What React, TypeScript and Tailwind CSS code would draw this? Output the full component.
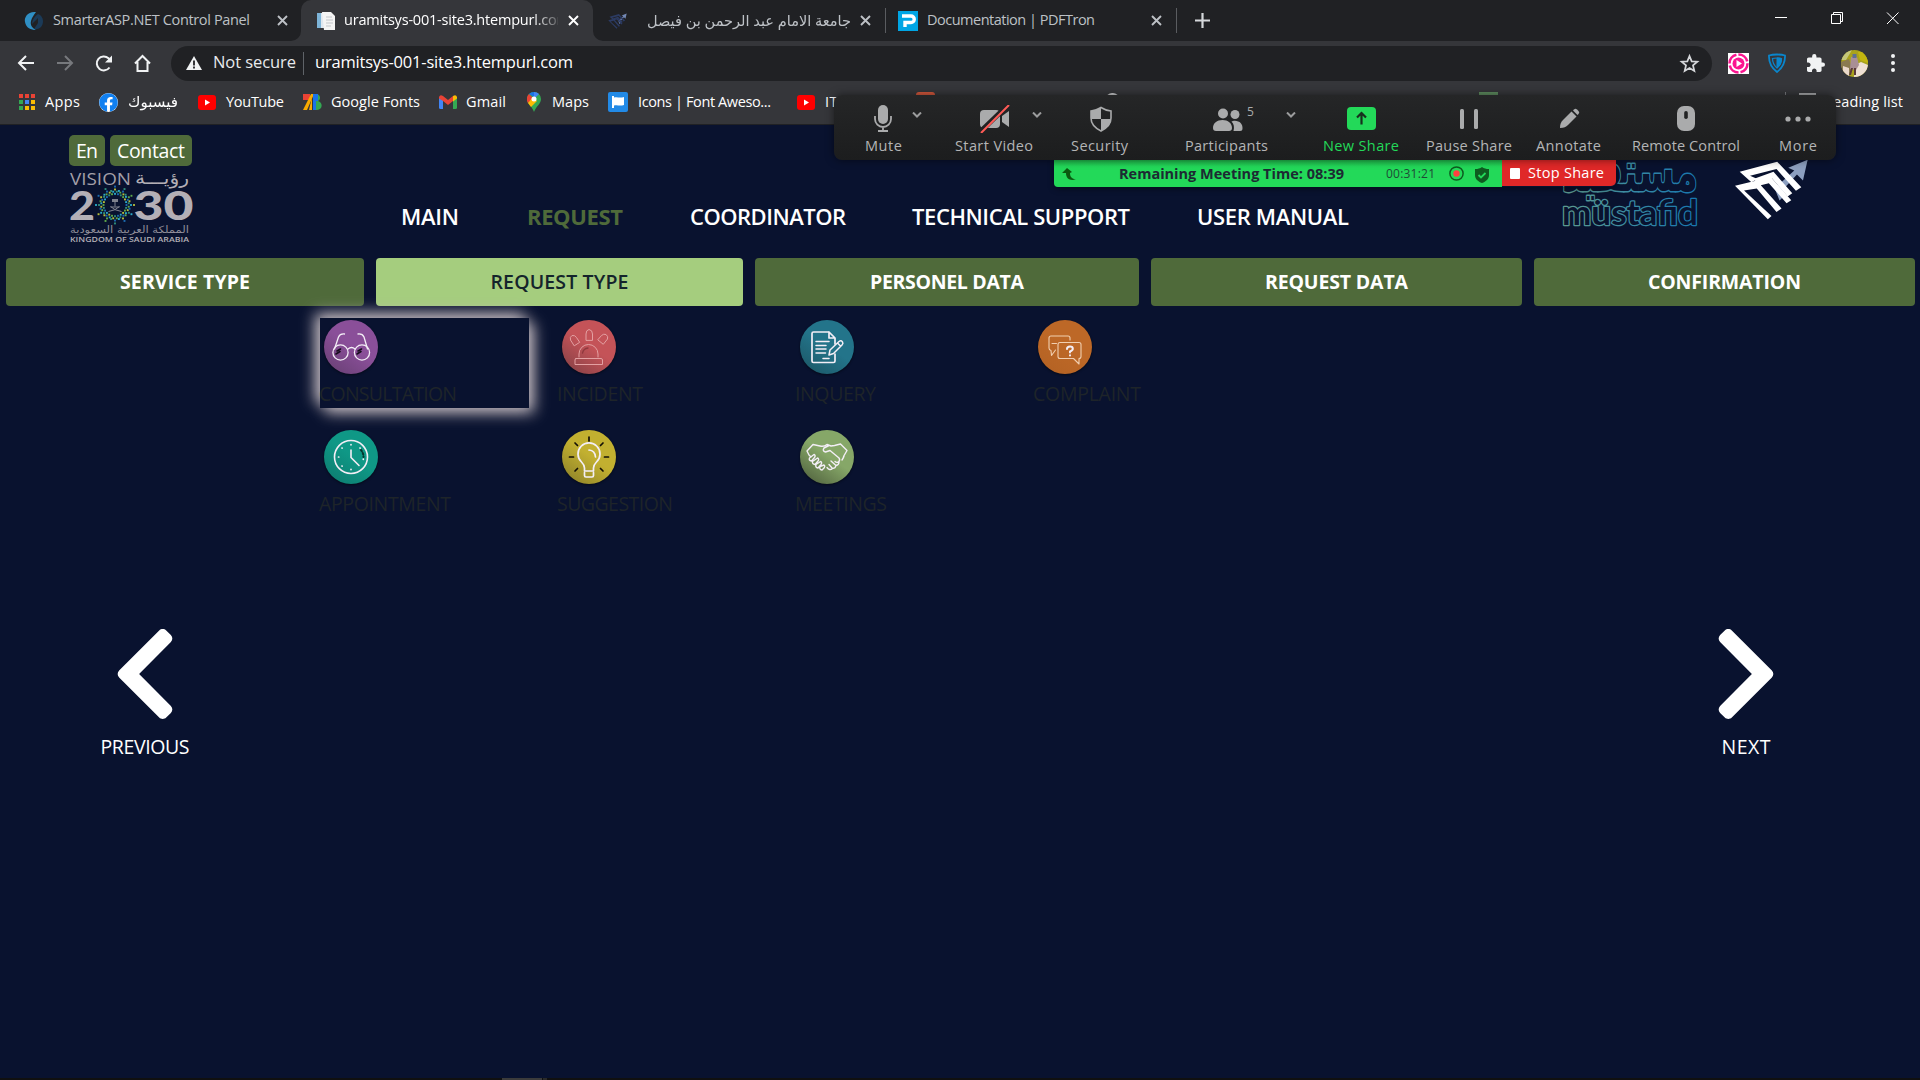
import { useLayoutEffect, useRef, type ReactNode } from 'react';
import { FaChevronLeft, FaChevronRight, FaFacebook } from 'react-icons/fa';

/** Single line of text that is spaced (or squeezed) to fill a fixed width. */
function Fit({ w, children, className = '', squeeze = false }: { w: number; children: string; className?: string; squeeze?: boolean }) {
  const ref = useRef<HTMLSpanElement>(null);
  useLayoutEffect(() => {
    const el = ref.current;
    if (!el) return;
    el.style.letterSpacing = '0px';
    el.style.transform = 'none';
    const natural = el.getBoundingClientRect().width;
    const target = w + 2;
    if (squeeze) el.style.transform = `scaleX(${target / natural})`;
    else el.style.letterSpacing = `${(target - natural) / Math.max(1, children.length - 1)}px`;
  }, [w, children, squeeze]);
  return (
    <span className={`block shrink-0 whitespace-nowrap ${className}`} style={{ width: w }}>
      <span ref={ref} className={squeeze ? '-ml-px inline-block origin-left' : '-ml-px inline-block'}>{children}</span>
    </span>
  );
}

const Cross = ({ className = '' }: { className?: string }) => (
  <svg viewBox="0 0 11 11" className={`h-[11px] w-[11px] shrink-0 ${className}`} stroke="currentColor" strokeWidth="1.9" fill="none">
    <path d="M1 1 10 10M10 1 1 10" />
  </svg>
);

const UniMark = ({ className = '', main = '#ffffff', arrow = '#8c9fc0' }: { className?: string; main?: string; arrow?: string }) => (
  <svg viewBox="582 55 224 185" className={className} fill="none">
    <path d="M802 60 744 84 762 92 716 134 706 152 718 182 736 164 728 150 770 104 788 122Z" fill={arrow} />
    <path d="M599 96 711 66 783 142 767 153 709 88 630 108 652 118 634 127Z" fill={main} />
    <path d="M640 118 700 96 756 160 742 170 696 116 650 128Z" fill={main} />
    <path d="M585 138 650 122 692 112 753 181 739 190 686 130 662 136 724 206 709 216 650 146 612 152 694 228 683 238Z" fill={main} />
  </svg>
);

function TabStrip() {
  return (
    <div className="flex h-[41px] items-center bg-[#202124] text-[14.5px] leading-5 text-[#bdc1c6]">
      <div className="flex h-full w-[301px] shrink-0 items-center">
        <svg viewBox="0 0 20 20" className="ml-6 h-5 w-5 shrink-0">
          <path d="M12 1C4 0 0 6 1 11c1 6 6 8 11 8-4-2-6-5-5-9s3-6 5-9Z" fill="#2f8fc4" />
          <path d="M14 3C10 6 8 9 8 13l6-6v5l-4 6c6 1 9-3 9-8 0-3-2-6-5-7Z" fill="#1b3a57" />
        </svg>
        <Fit w={195} className="ml-[10px] pb-[2px]">SmarterASP.NET Control Panel</Fit>
        <Cross className="ml-[28px]" />
      </div>
      <div className="relative flex h-full w-[292px] shrink-0 items-center rounded-t-[10px] bg-[#35363a] text-white">
        <svg viewBox="0 0 10 10" className="absolute bottom-0 -left-[10px] h-[10px] w-[10px]"><path d="M10 0v10H0A10 10 0 0 0 10 0Z" fill="#35363a" /></svg>
        <svg viewBox="0 0 10 10" className="absolute -right-[10px] bottom-0 h-[10px] w-[10px]"><path d="M0 0v10h10A10 10 0 0 1 0 0Z" fill="#35363a" /></svg>
        <svg viewBox="0 0 20 20" className="ml-[15px] h-5 w-5 shrink-0">
          <path d="M1 2h9l3 3v12H1Z" fill="#dfe7ef" /><path d="M1 2h4v15H1Z" fill="#7db4d8" />
          <path d="M6 1h9l4 4v14H8Z" fill="#f4f4f4" /><path d="M10 6h6M10 9h7M10 12h7M10 15h5" stroke="#c2c6ca" />
        </svg>
        <div className="ml-[8px] w-[214px] overflow-hidden pb-[2px] pl-px [mask-image:linear-gradient(90deg,#000_88%,transparent_103%)]">
          <Fit w={224}>uramitsys-001-site3.htempurl.com</Fit>
        </div>
        <Cross className="ml-[10px]" />
      </div>
      <UniMark className="ml-[15px] h-[18px] w-[19px] shrink-0" main="#2c3b63" arrow="#7388b4" />
      <Fit w={202} squeeze className="ml-[21px] pb-[2px] text-[15px]">جامعة الامام عبد الرحمن بن فيصل</Fit>
      <Cross className="ml-[10px]" />
      <div className="ml-[14px] h-[25px] w-px bg-[#5a5c60]" />
      <svg viewBox="0 0 20 20" className="ml-[12px] h-5 w-5 shrink-0">
        <path d="M0 0h20v20H0Z" fill="#00a5e4" />
        <path d="M4 5h9a3 3 0 0 1 0 6.500H7V16" fill="none" stroke="#fff" strokeWidth="3.400" />
      </svg>
      <Fit w={166} className="ml-[10px] pb-[2px]">Documentation | PDFTron</Fit>
      <Cross className="ml-[57px]" />
      <div className="ml-[14px] h-[25px] w-px bg-[#5a5c60]" />
      <svg viewBox="0 0 15 15" className="ml-[18px] h-[15px] w-[15px] shrink-0" stroke="#d5d8db" strokeWidth="2.200"><path d="M7.500 0v15M0 7.500h15" /></svg>
      <svg viewBox="0 0 124 12" className="mr-[21px] mb-[5px] ml-auto h-3 w-[124px] shrink-0" fill="none" stroke="#fff" strokeWidth="1">
        <path d="M0 5.500h12M56.500 2.500h9v9h-9ZM58.500 2.500v-2h9v9h-2" /><path d="M112 .5l11.500 11.500M123.500.5 112 12" />
      </svg>
    </div>
  );
}

function AddressBar() {
  return (
    <div className="flex h-[44px] items-center text-white">
      <svg viewBox="0 0 136 20" className="ml-[16px] mr-px h-5 w-[136px] shrink-0" fill="none" stroke="#f1f3f4" strokeWidth="2">
        <path d="M18 10H3.500M10 3 3 10l7 7" />
        <path d="M41 10h14.500M49 3l7 7-7 7" stroke="#77797d" />
        <path d="M93.500 14.500A7 7 0 1 1 92.500 5.200l2.500 3" /><path d="M96 2.500v7h-7Z" fill="#f1f3f4" stroke="none" />
        <path d="M119 10.500 126.500 3l7.500 7.500M121.500 9v9h10V9" />
      </svg>
      <div className="ml-[18px] flex h-[35px] w-[1541px] shrink-0 items-center rounded-full bg-[#202124] text-[16.500px]">
        <svg viewBox="0 0 16 14" className="ml-[15px] h-[14px] w-4 shrink-0"><path d="M8 0l8 14H0Z" fill="#f1f3f4" /><path d="M8 4.500v5M8 10.500v2" stroke="#202124" strokeWidth="1.800" /></svg>
        <Fit w={81} className="ml-[12px] pb-px text-[#e8eaed]">Not secure</Fit>
        <div className="ml-[8px] h-[23px] w-px bg-[#5f6368]" />
        <Fit w={256} className="ml-[12px] pb-px">uramitsys-001-site3.htempurl.com</Fit>
        <svg viewBox="0 0 24 24" className="mr-[12px] ml-auto h-[21px] w-[21px]" fill="none" stroke="#d5d7da" strokeWidth="2"><path d="M12 3.500l2.500 6 6.500.5-5 4.200 1.500 6.300L12 17.200 6.500 20.500 8 14.200 3 10l6.500-.5Z" /></svg>
      </div>
      <svg viewBox="0 0 21 21" className="ml-[16px] h-[21px] w-[21px] shrink-0">
        <path d="M0 0h21v21H0Z" fill="#fff" /><circle cx="10.500" cy="10.500" r="9" fill="none" stroke="#fb1590" strokeWidth="2.600" strokeDasharray="12 2" />
        <circle cx="10.500" cy="10.500" r="6" fill="#fb1590" /><path d="M8.500 7l5.500 3.500-5.500 3.500Z" fill="#fff" />
      </svg>
      <svg viewBox="0 0 18 20" className="ml-[19px] h-5 w-[18px] shrink-0" fill="none" stroke="#0a86cc">
        <path d="M9 1.500c3 0 5 0 8 1 .3 7-2 12-8 16.500C3 14.500.7 9.500 1 2.500c3-1 5-1 8-1Z" strokeWidth="1.800" />
        <path d="M9 5c2 0 3 0 4.500.5 0 4-1.500 7-4.500 9.500-3-2.500-4.500-5.500-4.500-9.500C6 5 7 5 9 5Z" strokeWidth="1.200" /><path d="M9 5c2 0 3 0 4.500.5 0 4-1.500 7-4.500 9.500Z" fill="#0a86cc" />
      </svg>
      <svg viewBox="2 1 21 21" className="ml-[21px] h-[18px] w-[18px] shrink-0" fill="#f1f3f4">
        <path d="M20.500 11H19V7c0-1.100-.9-2-2-2h-4V3.500a2.500 2.500 0 0 0-5 0V5H4c-1.100 0-1.990.9-1.990 2v3.800H3.500c1.490 0 2.700 1.210 2.700 2.700s-1.210 2.700-2.700 2.700H2V20c0 1.100.9 2 2 2h3.800v-1.500c0-1.490 1.210-2.700 2.700-2.700s2.700 1.210 2.700 2.700V22H17c1.100 0 2-.9 2-2v-4h1.500a2.500 2.500 0 0 0 0-5Z" />
      </svg>
      <svg viewBox="0 0 27 27" className="ml-[16px] h-[27px] w-[27px] shrink-0">
        <clipPath id="avatar"><circle cx="13.500" cy="13.500" r="13.500" /></clipPath>
        <g clipPath="url(#avatar)">
          <path d="M0 0h27v27H0Z" fill="#a9a21c" /><path d="M0 0h11L5 10H0Z" fill="#c5c77a" /><path d="M17 2h10v11L19 10Z" fill="#c3b50f" />
          <path d="M0 12l8-3 3 9-3 9H0Z" fill="#8a7a50" /><path d="M14 15l6-3 7 3v12H13Z" fill="#efe0d4" /><path d="M2 16l6 2v9H2Z" fill="#e9d8cb" />
          <path d="M10 7h6l2 8-3 5-6-1Z" fill="#a98f95" /><path d="M11.500 4h4v4h-4Z" fill="#5d6f95" /><path d="M10 18h2l-2 7H8ZM13 18h2v7h-2Z" fill="#5b3b3b" />
        </g>
      </svg>
      <svg viewBox="0 0 4 18" className="ml-[23px] h-[18px] w-1 shrink-0" fill="#f1f3f4"><circle cx="2" cy="2" r="2" /><circle cx="2" cy="9" r="2" /><circle cx="2" cy="16" r="2" /></svg>
    </div>
  );
}

const YouTube = ({ className = '' }: { className?: string }) => (
  <svg viewBox="0 0 18 15" className={`h-[15px] w-[18px] shrink-0 ${className}`}><rect width="18" height="15" rx="3" fill="#f00" /><path d="M7 4.500l5 3-5 3Z" fill="#fff" /></svg>
);

const appDots = ['#ea4335', '#ea4335', '#ea4335', '#34a853', '#4285f4', '#fbbc04', '#34a853', '#fbbc04', '#fbbc04'];

function Bookmarks() {
  return (
    <div className="flex h-[34px] items-center text-[14.500px] leading-5 text-white">
      <div className="ml-[19px] grid h-4 w-4 shrink-0 grid-cols-3 gap-[2px]">
        {appDots.map((c, i) => <i key={i} style={{ background: c }} />)}
      </div>
      <Fit w={33} className="ml-[11px]">Apps</Fit>
      <span className="ml-5 flex h-[19px] w-[19px] shrink-0 rounded-full bg-white"><FaFacebook className="h-[19px] w-[19px] text-[#1180f0]" /></span>
      <Fit w={48} squeeze className="ml-[11px]">فيسبوك</Fit>
      <YouTube className="ml-[21px]" />
      <Fit w={56} className="ml-[11px]">YouTube</Fit>
      <svg viewBox="0 0 19 16" className="ml-5 h-4 w-[19px] shrink-0">
        <path d="M0 0h7v6H0Z" fill="#ea4335" /><path d="M8 0h3L4 16H0Z" fill="#f9ab00" /><path d="M9 3v13H6Z" fill="#f9ab00" />
        <path d="M10 0h3v16h-3Z" fill="#1a73e8" /><path d="M13 0c5 0 5 6 2 7 5 1 5 9-1 9h-1Z" fill="#34a853" /><path d="M13 0h2v7h-2Z" fill="#1a73e8" />
      </svg>
      <Fit w={87} className="ml-[10px]">Google Fonts</Fit>
      <svg viewBox="0 0 18 14" className="ml-5 h-[14px] w-[18px] shrink-0">
        <path d="M0 2h4v12H1.500Q0 14 0 12.500Z" fill="#4285f4" /><path d="M14 2h4v10.500Q18 14 16.500 14H14Z" fill="#34a853" />
        <path d="M0 2Q1-1 4 1l5 4 5-4v5l-5 4-5-4L0 3.500Z" fill="#ea4335" /><path d="M14 1q3-2 4 1v1.500L14 6.500Z" fill="#fbbc04" />
      </svg>
      <Fit w={38} className="ml-[10px]">Gmail</Fit>
      <svg viewBox="0 0 14 20" className="ml-[22px] h-5 w-[14px] shrink-0">
        <path d="M7 0a7 7 0 0 1 7 7c0 5-5 7-7 13C5 14 0 12 0 7a7 7 0 0 1 7-7Z" fill="#34a853" /><path d="M7 7 2 2a7 7 0 0 0-1 9Z" fill="#ea4335" />
        <path d="M7 7V0a7 7 0 0 1 5 2Z" fill="#4285f4" /><path d="M7 0v5L2 2A7 7 0 0 1 7 0Z" fill="#1a73e8" /><path d="M1 11l5-6 4 4-6 6Z" fill="#fbbc04" /><circle cx="7" cy="7" r="2.500" fill="#fff" />
      </svg>
      <Fit w={35} className="ml-[12px]">Maps</Fit>
      <svg viewBox="0 0 20 20" className="ml-5 h-5 w-5 shrink-0"><rect width="20" height="20" rx="2" fill="#228ae6" /><path d="M4 4h2v1.500c4-1 5 1 10-.5v8c-5 1.500-6-.5-10 .5V16H4Z" fill="#fff" /></svg>
      <Fit w={131} className="ml-[11px]">Icons | Font Aweso...</Fit>
      <YouTube className="ml-[27px]" />
      <Fit w={15} className="ml-[11px]">ITI</Fit>
      <div className="ml-[75px] h-5 w-[19px] shrink-0 rounded-[3px] bg-[#d1573c]" />
      <div className="ml-[171px] h-[18px] w-[13px] shrink-0 rounded-[6px] bg-[#c9cacc]" />
      <div className="ml-[360px] h-5 w-[19px] shrink-0 bg-[#5c8a5e]" />
      <div className="ml-[287px] h-5 w-px shrink-0 bg-[#77797d]" />
      <div className="mb-[16px] ml-[13px] h-[2px] w-[17px] shrink-0 bg-[#a5a6a8]" />
      <Fit w={77} className="ml-[9px]">Reading list</Fit>
    </div>
  );
}

const caret = (
  <svg viewBox="0 0 10 6" className="h-[6px] w-[10px]" fill="none" stroke="#9b9c9d" strokeWidth="2"><path d="M1 .5l4 4 4-4" /></svg>
);

const meetingActions: { label: string; w: number; gap: string; icon: ReactNode; menu?: string; tone?: string; count?: string }[] = [
  { label: 'Mute', w: 35, gap: 'ml-[32px]', menu: 'left-[46px]', icon: (
    <svg viewBox="0 0 18 27" className="mr-[2px] h-[27px] w-[18px]" fill="#aaabac"><rect x="4" width="10" height="19" rx="5" /><path d="M1 11v3a8 8 0 0 0 16 0v-3M9 21v5M4 26h10" fill="none" stroke="#aaabac" strokeWidth="1.800" /></svg>) },
  { label: 'Start Video', w: 76, gap: 'ml-[55px]', menu: 'left-[76px]', icon: (
    <svg viewBox="0 0 30 28" className="ml-px h-7 w-[30px]"><rect y="5" width="20" height="18" rx="4" fill="#aaabac" /><path d="M22 11l7-5v16l-7-5Z" fill="#aaabac" /><path d="M0 27 28 0" stroke="#222324" strokeWidth="5" /><path d="M1 28 29 0" stroke="#ff5b57" strokeWidth="2" /></svg>) },
  { label: 'Security', w: 55, gap: 'ml-[40px]', icon: (
    <svg viewBox="0 0 24 26" className="ml-[2px] h-[26px] w-6"><path d="M12 1.500c3 2 6 3 10 3.500V12c0 6-4 10-10 13C6 22 2 18 2 12V5c4-.5 7-1.500 10-3.500Z" fill="none" stroke="#aaabac" strokeWidth="1.600" /><path d="M12 1.500c-3 2-6 3-10 3.500v8h10ZM12 13h10c0 5-4 9-10 12Z" fill="#aaabac" /></svg>) },
  { label: 'Participants', w: 81, gap: 'ml-[59px]', menu: 'left-[100px]', count: '5', icon: (
    <svg viewBox="0 0 30 23" className="mt-[2px] ml-[2px] h-[23px] w-[30px]" fill="#aaabac"><circle cx="10" cy="5.500" r="5" /><circle cx="22" cy="6.500" r="4.500" /><path d="M0 20c0-5 4-8 9.500-8s9.500 3 9.500 8q0 3-3 3H3q-3 0-3-3ZM20 13c6-1 10 3 9.500 7.500Q29.500 23 27 23h-6.500c1-4 .5-7-2-9.500Z" /></svg>) },
  { label: 'New Share', w: 74, gap: 'ml-[57px]', tone: 'text-[#23d959]', icon: (
    <svg viewBox="0 0 29 23" className="h-[23px] w-[29px]"><rect width="29" height="23" rx="4" fill="#23d959" /><path d="M14.500 17.500V6.500M10 10.500l4.500-4.500 4.500 4.500" fill="none" stroke="#17301e" strokeWidth="2.200" /></svg>) },
  { label: 'Pause Share', w: 84, gap: 'ml-[29px]', icon: (
    <svg viewBox="0 0 18 20" className="h-5 w-[18px]" fill="#aaabac"><rect width="4" height="20" rx="1.500" /><rect x="14" width="4" height="20" rx="1.500" /></svg>) },
  { label: 'Annotate', w: 63, gap: 'ml-[26px]', icon: (
    <svg viewBox="0 0 21 21" className="ml-px h-[21px] w-[21px]" fill="#aaabac"><path d="M1 20c0-4 1-6 3-8l8.500-8.500 5 5L9 17c-2 2-4 3-8 3Z" /><path d="M14 2.500l1-1q1.500-1.500 3 0l1.500 1.500q1.500 1.500 0 3l-1 1Z" /></svg>) },
  { label: 'Remote Control', w: 106, gap: 'ml-[33px]', icon: (
    <svg viewBox="0 0 18 25" className="h-[25px] w-[18px]"><rect width="18" height="25" rx="7" fill="#aaabac" /><rect x="7.200" y="5" width="3.600" height="8" rx="1.800" fill="#222324" /></svg>) },
  { label: 'More', w: 36, gap: 'ml-[41px]', icon: (
    <svg viewBox="0 0 26 6" className="h-[6px] w-[26px]" fill="#aaabac"><circle cx="3" cy="3" r="2.600" /><circle cx="13" cy="3" r="2.600" /><circle cx="23" cy="3" r="2.600" /></svg>) },
];

function MeetingOverlay() {
  return (
    <div className="absolute top-[95px] left-[834px] w-[1002px]">
      <div className="relative z-10 flex h-[65px] rounded-[8px] bg-linear-to-b from-[#252627] to-[#1c1d1e] shadow-[0_0_8px_rgba(0,0,0,0.5)]">
        {meetingActions.map((a) => (
          <div key={a.label} className={`relative flex shrink-0 flex-col items-center ${a.gap}`} style={{ width: a.w }}>
            <div className="flex h-[34px] items-center justify-center pt-[13px]">{a.icon}</div>
            {a.menu && <span className={`absolute top-[17px] ${a.menu}`}>{caret}</span>}
            {a.count && <span className="absolute top-[9px] left-[61px] text-[12px] leading-4 text-[#aaabac]">{a.count}</span>}
            <Fit w={a.w} className={`mt-[7px] text-[14.500px] leading-5 ${a.tone ?? 'text-[#b4b5b6]'}`}>{a.label}</Fit>
          </div>
        ))}
      </div>
      <div className="ml-[220px] flex h-[27px] w-[562px] items-start rounded-b-[5px] shadow-[0_2px_6px_rgba(0,0,0,0.4)]">
        <div className="flex h-[27px] w-[448px] items-center rounded-bl-[4px] bg-linear-to-b from-[#1fb84b] from-0% via-[#23d959] via-25% to-[#23d959]">
          <svg viewBox="0 0 14 12" className="ml-2 h-3 w-[14px]" fill="#0b5a10"><path d="M5 0l5 4-2 1c0 4 2 6 6 6.500-6 1.500-10-.5-10-6.500H0Z" /></svg>
          <Fit w={223} className="ml-[44px] text-[14.500px] leading-5 font-bold text-[#1d2a33]">Remaining Meeting Time: 08:39</Fit>
          <Fit w={47} className="ml-[44px] text-[12px] leading-5 text-[#1f4a36]">00:31:21</Fit>
          <svg viewBox="0 0 15 15" className="ml-[15px] h-[15px] w-[15px]"><circle cx="7.500" cy="7.500" r="6.600" fill="none" stroke="#0e5b20" strokeWidth="1.500" /><circle cx="7.500" cy="7.500" r="3.200" fill="#ff4040" /></svg>
          <svg viewBox="0 0 14 16" className="mt-[2px] ml-[11px] h-4 w-[14px]"><path d="M7 0c2 1.500 4 2 7 2v6c0 4-3 6.500-7 8-4-1.500-7-4-7-8V2c3 0 5-.5 7-2Z" fill="#0e5b20" /><path d="M3.500 8l2.500 2.500L10.500 6" fill="none" stroke="#23d959" strokeWidth="1.800" /></svg>
        </div>
        <div className="flex h-[26px] w-[114px] items-center rounded-br-[5px] bg-[#e02828] text-white">
          <div className="ml-2 h-[11px] w-[10px] rounded-[1px] bg-white" />
          <Fit w={74} className="ml-[9px] text-[14.500px] leading-5">Stop Share</Fit>
        </div>
      </div>
    </div>
  );
}

const emblemColors = ['#2aa9c9', '#5da94a', '#1c6bb0', '#b6bd3a', '#2f8f7a'];
/* Twelve-pointed star of small tiles round the palm emblem. */
const emblem = Array.from({ length: 84 }, (_, i) => {
  const ring = Math.floor(i / 24);
  const step = ring === 3 ? 12 : 24;
  const a = (((i % 24) + (ring === 1 ? 0.5 : 0)) / step) * Math.PI * 2 - Math.PI / 2;
  const r = [11.5, 13.8, 16, 19][ring] + (ring === 2 && i % 2 ? -1 : 0);
  return { x: 44.5 + Math.cos(a) * r, y: 18.5 + Math.sin(a) * r * 0.97, c: emblemColors[(i * 7 + ring) % 5] };
});

function VisionLogo() {
  return (
    <svg viewBox="0 0 124 74" className="h-[74px] w-[124px] overflow-visible" fill="#b3afb6" fontFamily="'Open Sans', 'Noto Sans', sans-serif">
      <text x="0" y="15" fontSize="16.500" textLength="61" lengthAdjust="spacingAndGlyphs" fill="#a29fa8">VISION</text>
      <text x="119" y="14" fontSize="17.500" textLength="54" lengthAdjust="spacingAndGlyphs" direction="rtl" fontFamily="'DejaVu Sans', sans-serif">رؤيـــة</text>
      <g fontFamily="Lato, sans-serif" fontWeight="900" fontSize="40">
        <text x="-1" y="49.500" textLength="26" lengthAdjust="spacingAndGlyphs">2</text>
        <text x="63.500" y="49.500" textLength="60" lengthAdjust="spacingAndGlyphs">30</text>
      </g>
      <g transform="translate(.5 16.500)">
        {emblem.map((d, i) => <rect key={i} x={d.x - 0.95} y={d.y - 0.95} width="1.900" height="1.900" fill={d.c} />)}
        <path d="M41.500 12.500h6v3h-6Z" fill="#7d808c" />
        <path d="M44.500 15v5M38 25q7-1 11-5M51 25q-7-1-11-5M40 20.500h9" stroke="#8d8f9a" strokeWidth=".9" fill="none" />
      </g>
      <text x="119" y="63" fontSize="10" textLength="119" lengthAdjust="spacingAndGlyphs" direction="rtl" fontFamily="'DejaVu Sans', sans-serif" fill="#8f8d98">المملكة العربية السعودية</text>
      <text x="0" y="72" fontSize="7" fontWeight="600" textLength="119" lengthAdjust="spacingAndGlyphs">KINGDOM OF SAUDI ARABIA</text>
    </svg>
  );
}

function MustafidLogo() {
  return (
    <svg viewBox="0 0 140 72" className="h-[72px] w-[140px]" fill="#09122f" stroke="url(#teal)" strokeLinejoin="round">
      <linearGradient id="teal" gradientUnits="userSpaceOnUse" x1="0" x2="138"><stop stopColor="#5e9a8e" /><stop offset=".5" stopColor="#3a8ba3" /><stop offset="1" stopColor="#1676b0" /></linearGradient>
      <g transform="scale(1 1.3)">
        <text x="137" y="24" textLength="136" lengthAdjust="spacingAndGlyphs" direction="rtl" fontSize="42" fontWeight="700" strokeWidth="2.200" paintOrder="stroke" fontFamily="'DejaVu Sans', sans-serif">مستفيد</text>
      </g>
      <text x="1" y="65" textLength="136" lengthAdjust="spacingAndGlyphs" fontSize="34" fontWeight="700" strokeWidth="2.400" paintOrder="stroke" fontFamily="Lato, sans-serif">müstafid</text>
    </svg>
  );
}

const Disc = ({ id, from, to, children }: { id: string; from: string; to: string; children: ReactNode }) => (
  <svg viewBox="0 0 54 54" className="h-[54px] w-[54px] drop-shadow-[0_1px_1px_rgba(0,0,0,0.5)]" fill="none" stroke="#f3eef6" strokeWidth="1.300" strokeLinecap="round" strokeLinejoin="round">
    <linearGradient id={id} x1=".8" y1="0.1" x2=".2" y2=".95"><stop stopColor={from} /><stop offset=".45" stopColor={from} /><stop offset="1" stopColor={to} /></linearGradient>
    <circle cx="27" cy="27" r="27" fill={`url(#${id})`} stroke="none" />
    {children}
  </svg>
);

const requests: { label: string; w: number; icon: ReactNode }[] = [
  { label: 'CONSULTATION', w: 136, icon: (
    <Disc id="g1" from="#8a4f99" to="#6d4279">
      <circle cx="16.500" cy="32.500" r="7.600" /><circle cx="38" cy="32.500" r="7.600" /><path d="M24 29q3.500-3 7 0M10.500 29 14.500 17q1.500-3.500 6-3M43.500 29 40 17q-1.500-3.500-6-3" />
      <path d="M13 31l3.500-2M12 34l4-2.500M34 31l3.500-2M33 34l4-2.500" stroke="#160d1c" strokeWidth="1.600" />
    </Disc>) },
  { label: 'INCIDENT', w: 84, icon: (
    <Disc id="g2" from="#c45358" to="#8e4348">
      <g stroke="#e3a0a2" strokeWidth="1"><path d="M17 37V34a9.500 9.500 0 0 1 19 0v3M14 38.500h25q1.500 0 1.500 1.500v4.500H13V40q0-1.500 1-1.500ZM24 20v-6q0-4 3-4.500 3.500.5 3.500 4.500v6ZM12 25.500l-3.500-5.500q-1-3 1.500-4.500 3-.5 4.500 2l3 4.500ZM41.500 24l4-5q1-2.500-1.500-4.500-2.500-1-4.500 1L36 19.500Z" /></g>
      <path d="M20.500 33q1-4.500 5.500-5" stroke="#8f393e" />
    </Disc>) },
  { label: 'INQUERY', w: 79, icon: (
    <Disc id="g3" from="#23748a" to="#1d5b6b">
      <path d="M28.500 12H13.500q-1.500 0-1.500 1.500V41q0 1.500 1.500 1.500H33.500q1.500 0 1.500-1.500V34M35 24V18L29 12v6h6" strokeWidth="1.700" /><path d="M16 21.500h13M16 25.500h10M16 29h10M16 33h9.500M23 38.500h6" strokeWidth="1.500" />
      <path d="M29 35l1-5L39 21.500q2-1.500 3.500.5 1 1.500-.5 3L33.500 33.500ZM37.500 23l3 3" strokeWidth="1.500" />
    </Disc>) },
  { label: 'COMPLAINT', w: 106, icon: (
    <Disc id="g4" from="#bd6827" to="#b56324">
      <path d="M32 20v-2q0-2-2-2H13q-2 0-2 2v10q0 2 2 2.500l.5 5 4-5.500M14 23.500h4.500M22 22.500h19q2 0 2 2v12q0 2-2 2v5.500l-5.500-5.500H22q-2 0-2-2v-12q0-2 2-2Z" stroke="#f1cfb0" strokeWidth="1.100" />
      <path d="M29 29q0-2.500 3-2.500 2.800 0 2.800 2.300 0 1.700-2.800 2.700v1M32 35.300v.2" strokeWidth="2" />
    </Disc>) },
  { label: 'APPOINTMENT', w: 130, icon: (
    <Disc id="g5" from="#0f9886" to="#0d7f72">
      <circle cx="27" cy="27" r="16.500" strokeWidth="1.600" /><path d="M27 20v7.500l8 8" strokeWidth="1.600" />
      <path d="M27 14.500v.3M27 39.300v.3M14.500 27h.3M39.300 29v.3M18 18l.1.1M36 18l.1.1M18 36l.1.1" strokeWidth="1.700" /><path d="M37 20q2.500 3 2.500 7" stroke="#06372f" strokeWidth="2" strokeDasharray="1.500 2" />
    </Disc>) },
  { label: 'SUGGESTION', w: 114, icon: (
    <Disc id="g6" from="#c2b030" to="#94882a">
      <path d="M22.500 41v-3q0-3-3-6a11 11 0 1 1 15 0q-3 3-3 6v3ZM22.500 42.500v3q0 1.500 1.500 1.500h6q1.500 0 1.500-1.500v-3M27 20q6 .5 6.500 7" strokeWidth="1.700" />
      <path d="M27 7v4M13 13l2.500 2.500M41 13l-2.500 2.500M7.500 27h4M42.500 27h4M13 41l2.500-2.500M41 41l-2.500-2.500" stroke="#141006" strokeWidth="1.700" />
    </Disc>) },
  { label: 'MEETINGS', w: 90, icon: (
    <Disc id="g7" from="#86a768" to="#576a43">
      <path d="M9 25 7 21l6-6.500 7 1.500q4 1 7-1.500l4 1.500 3.500-.5 6-1.500 6.500 6.500-3.500 6M29 15.500l-5 2.500q-2 3 1.500 4l4.500-1.500 9 7.500q1.500 2-.5 4-2 1-3.500-.5M39 32q0 3-3 3.500L31 31M36 35.500q-.5 3-3.500 3L29 34.500M32.500 38.500q-3 2.500-5.500-1M9 25l2 2M14 24.500q2 1 .5 3L11.500 31q-3-.5-2-3ZM17.500 28q2 1 .5 3l-3 3.500q-3-.5-2.500-3ZM20.500 31.500q2 1 .5 3l-3 3.500q-3-.5-2-3.500ZM24 35q1.500 1 0 3l-2 2q-3-.5-2-3.500ZM42 30q1.500-2 2-4" strokeWidth="1.400" />
    </Disc>) },
];

const steps = [
  { label: 'SERVICE TYPE', w: 128 },
  { label: 'REQUEST TYPE', w: 136, current: true },
  { label: 'PERSONEL DATA', w: 152 },
  { label: 'REQUEST DATA', w: 141 },
  { label: 'CONFIRMATION', w: 151 },
];

export default function App() {
  return (
    <div className="relative flex h-[1080px] w-[1920px] flex-col overflow-hidden bg-[#09122f] font-['Open_Sans','Noto_Sans','DejaVu_Sans',sans-serif]">
      <div className="h-[125px] shrink-0 border-b border-[#202124] bg-[#35363a]">
        <TabStrip />
        <AddressBar />
        <Bookmarks />
      </div>

      <header className="flex h-[133px] shrink-0">
        <div className="ml-[69px] w-[333px] shrink-0 pt-[10px]">
          <div className="flex h-[31px] gap-[5px] text-[19.500px] leading-[31px] text-white">
            <a className="rounded-[5px] bg-[#4f6a3a] px-2"><Fit w={20}>En</Fit></a>
            <a className="rounded-[5px] bg-[#4f6a3a] px-2"><Fit w={66}>Contact</Fit></a>
          </div>
          <div className="mt-[4px] ml-px"><VisionLogo /></div>
        </div>
        <nav className="flex h-[32px] w-[1160px] shrink-0 pt-[75px] text-[22px] leading-8 font-semibold text-white">
          <Fit w={56}>MAIN</Fit>
          <Fit w={94} className="ml-[70px] font-bold text-[#4f6a3a]">REQUEST</Fit>
          <Fit w={154} className="ml-[69px]">COORDINATOR</Fit>
          <Fit w={216} className="ml-[68px]">TECHNICAL SUPPORT</Fit>
          <Fit w={150} className="ml-[69px]">USER MANUAL</Fit>
        </nav>
        <div className="mt-[35px] -ml-px"><MustafidLogo /></div>
        <UniMark className="mt-[33px] ml-[33px] h-[62px] w-[75px]" />
      </header>

      <div className="grid h-[48px] shrink-0 grid-cols-[358px_367px_384px_371px_381px] gap-3 pl-[6px]">
        {steps.map((s) => (
          <div key={s.label} className={`flex items-center justify-center rounded-[4px] text-[19.500px] leading-[46px] ${s.current ? 'bg-[#a5cd7e] font-semibold text-[#14242b]' : 'bg-[#4f6a3a] font-bold text-white'}`}>
            <Fit w={s.w}>{s.label}</Fit>
          </div>
        ))}
      </div>

      <main className="mt-[12px] flex">
        <div className="flex w-[290px] shrink-0 flex-col items-center pt-[303px] text-[19.500px] leading-7 text-white">
          <FaChevronLeft className="h-[106px] w-[66px]" />
          <Fit w={87} className="mt-[6px]">PREVIOUS</Fit>
        </div>
        <div className="ml-[30px] grid w-[925px] shrink-0 auto-rows-[90px] grid-cols-[209px_209px_209px_209px] content-start gap-x-[29px] gap-y-5">
          {requests.map((r, i) => (
            <div key={r.label} className={`pt-[2px] ${i === 0 ? 'shadow-[-5px_-5px_14px_#bdb5bb,5px_5px_14px_#bdb5bb]' : ''}`}>
              <div className="ml-[3.5px]">{r.icon}</div>
              <Fit w={r.w} className="mt-[6px] text-[19.500px] leading-7 text-[#1e2429]">{r.label}</Fit>
            </div>
          ))}
        </div>
        <div className="ml-[327px] flex w-[348px] shrink-0 flex-col items-center pt-[303px] text-[19.500px] leading-7 text-white">
          <FaChevronRight className="h-[106px] w-[66px]" />
          <Fit w={47} className="mt-[6px]">NEXT</Fit>
        </div>
      </main>

      <div className="mt-auto flex h-[2px] bg-[#101010]">
        <div className="ml-[502px] h-[2px] w-10 bg-[#3b3b3b]" />
        <div className="ml-px h-[2px] w-1 bg-[#2a2a2a]" />
      </div>

      <MeetingOverlay />
    </div>
  );
}
